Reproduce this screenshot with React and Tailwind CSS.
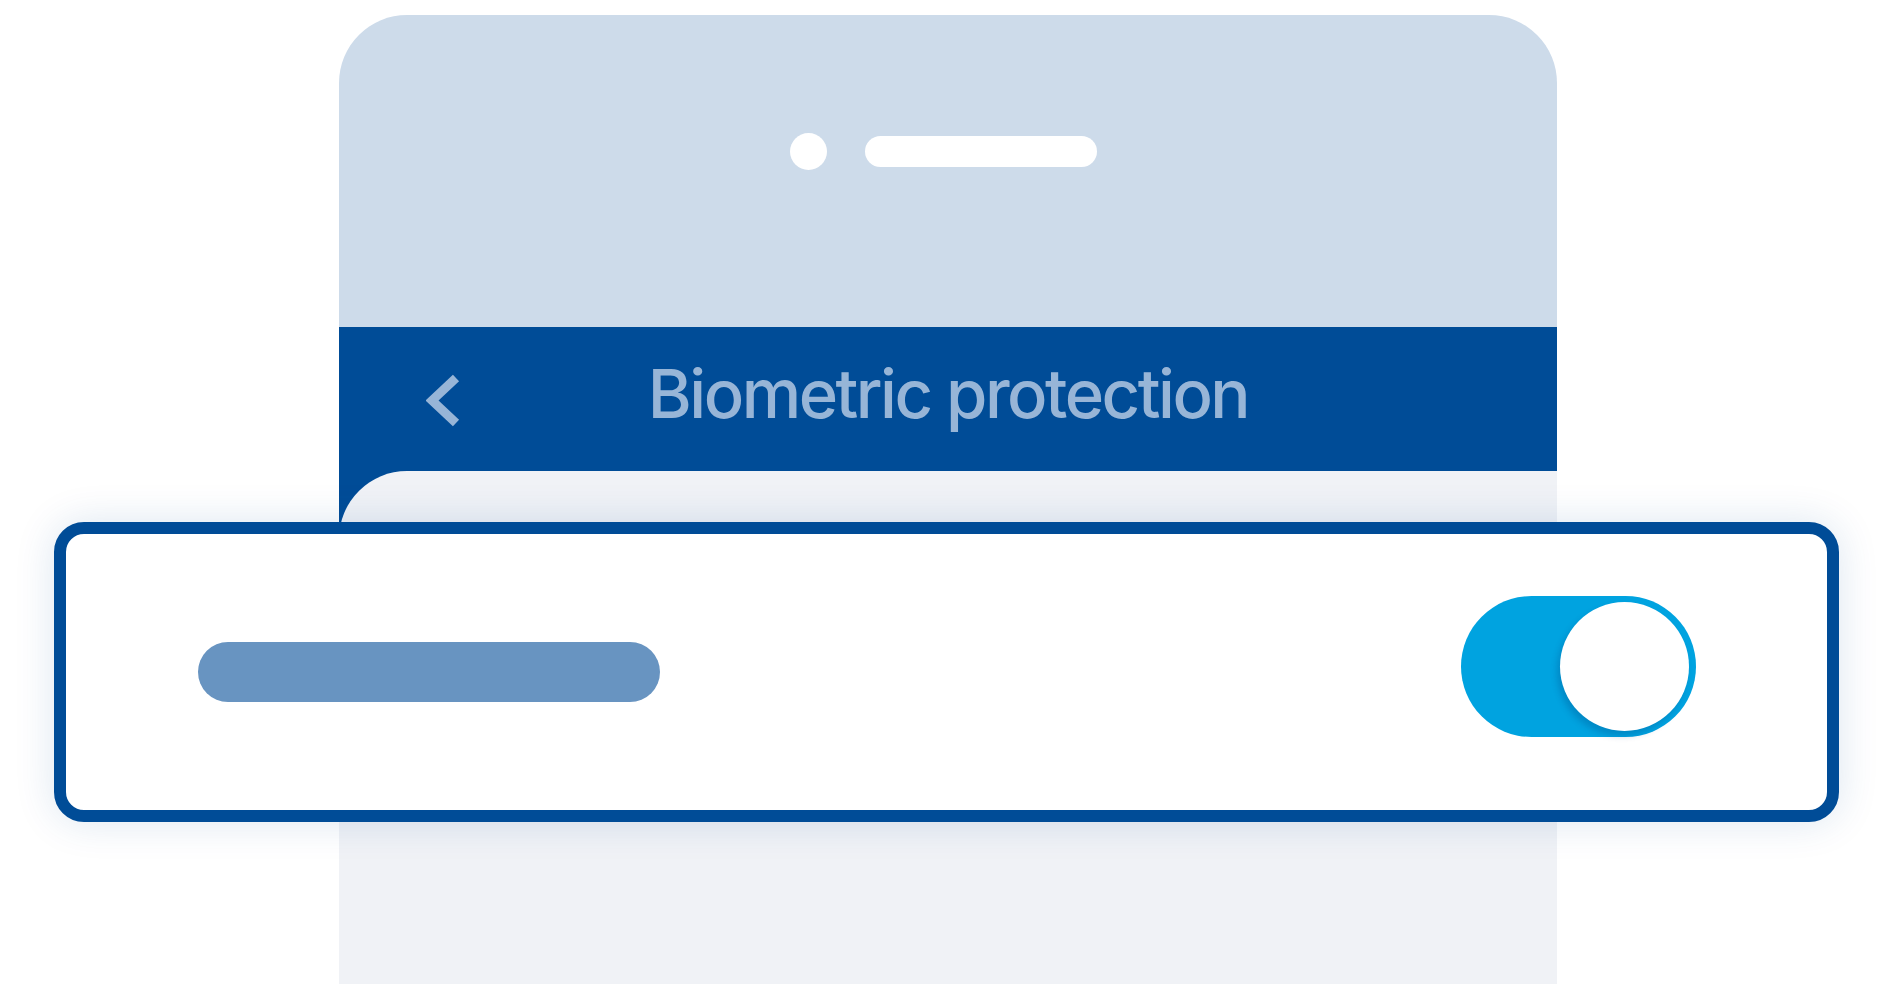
export default function App() {
  return (
    <div className="relative w-[1896px] h-[1008px] bg-white overflow-hidden" style={{ fontFamily: 'Inter, "Noto Sans", sans-serif' }}>
      <div className="pt-[15px] pl-[339px]">
        <div className="w-[1218px] flex flex-col">
          <div className="h-[312px] bg-[#cddbea] rounded-t-[68px] pt-[118px] pl-[451px]">
            <div className="flex items-center gap-[38px]">
              <div className="w-[37px] h-[37px] rounded-full bg-white" />
              <div className="w-[232px] h-[31px] rounded-full bg-white" />
            </div>
          </div>
          <div className="h-[144px] bg-[#004c97] grid grid-cols-[1fr_auto_1fr] items-center">
            <div className="pl-[87px] pt-[2px]">
              <svg width="36" height="53" viewBox="0 0 36 53" className="block">
                <path d="M30 4 L6 26.5 L30 49" fill="none" stroke="#97b5d7" strokeWidth="9" strokeLinejoin="miter" />
              </svg>
            </div>
            <div className="text-[67px] font-medium leading-none text-[#97b5d7] tracking-[-2.5px] pb-[12px]">Biometric protection</div>
            <div />
          </div>
          <div className="bg-[#004c97]">
            <div className="h-[513px] bg-[#f0f2f6] rounded-tl-[68px]" />
          </div>
        </div>
      </div>

      <div className="absolute left-[54px] top-[522px] w-[1785px] h-[300px] rounded-[30px] border-[12px] border-[#004c97] bg-white shadow-[0_0_40px_rgba(0,76,151,0.14)] flex items-center justify-between pl-[132px] pr-[131px]">
        <div className="w-[462px] h-[60px] rounded-full bg-[#6894c1]" />
        <div className="w-[235px] h-[141px] rounded-full bg-[#00a3e0] flex items-start justify-end pt-[6px] pr-[7px] mb-[12px]">
          <div className="w-[129px] h-[129px] rounded-full bg-white shadow-[-3px_5px_6px_rgba(0,60,120,0.25)]" />
        </div>
      </div>
    </div>
  );
}
